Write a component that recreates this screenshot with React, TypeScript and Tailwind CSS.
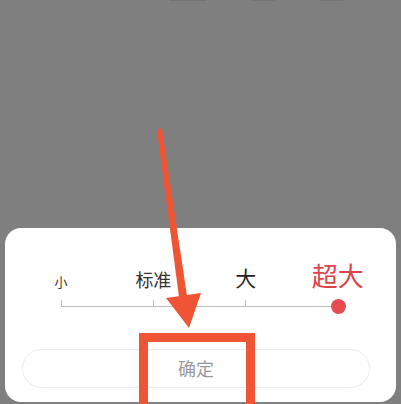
import React from 'react';

const LEVELS = [
  { label: '小', cls: 'text-[13px] text-[#333]' },
  { label: '标准', cls: 'text-[18px] text-[#333]' },
  { label: '大', cls: 'text-[21px] text-[#222]' },
  { label: '超大', cls: 'text-[26px] text-[#dc434a]' },
];

export default function App() {
  return (
    <div
      className="relative flex h-[404px] w-full flex-col overflow-hidden bg-[#7f7f7f]"
      style={{ fontFamily: '"Noto Sans CJK SC", "Noto Sans", sans-serif' }}
    >
      {/* cut-off bits of the page behind the dimmer */}
      <div className="flex h-px pl-[170px]">
        <div className="w-[36px] bg-[#747474]" />
        <div className="ml-[46px] w-[23px] bg-[#747474]" />
        <div className="ml-[45px] w-[23px] bg-[#747474]" />
      </div>

      <div className="flex-1" />

      {/* font size sheet */}
      <div className="mx-[5px] mb-[2px] h-[174px] rounded-[16px] bg-white pt-[34px]">
        <div className="ml-[10px] grid w-[369px] grid-cols-4 items-end">
          {LEVELS.map((l) => (
            <div key={l.label} className={`text-center leading-none ${l.cls}`}>
              {l.label}
            </div>
          ))}
        </div>

        <div className="relative ml-[56px] mt-[12px] h-[7px] w-[277px]">
          <div className="flex h-[6px] justify-between">
            <div className="w-px bg-[#bdbdbd]" />
            <div className="w-px bg-[#bdbdbd]" />
            <div className="w-px bg-[#bdbdbd]" />
            <div className="w-px bg-transparent" />
          </div>
          <div className="h-px bg-[#bdbdbd]" />
          <div className="absolute right-[-8px] top-[-1px] h-[15px] w-[15px] rounded-full bg-[#e84a50]" />
        </div>

        <div className="ml-[17px] mr-[26px] mt-[42px] flex h-[39px] items-center justify-center rounded-full border border-[#ececec] text-[18px] text-[#9a9a9a]">
          确定
        </div>
      </div>

      {/* annotation: highlight box */}
      <div className="absolute left-[139px] top-[333px] h-[80px] w-[116px] border-[9px] border-[#ef5534]" />

      {/* annotation: arrow */}
      <svg className="absolute left-0 top-0" width="401" height="404" viewBox="0 0 401 404">
        <polygon points="157,131 162,129 187,296 179,297" fill="#ef5534" />
        <circle cx="159.5" cy="131" r="2.5" fill="#ef5534" />
        <polygon points="166,298 201,293 189,328" fill="#ef5534" />
      </svg>
    </div>
  );
}
